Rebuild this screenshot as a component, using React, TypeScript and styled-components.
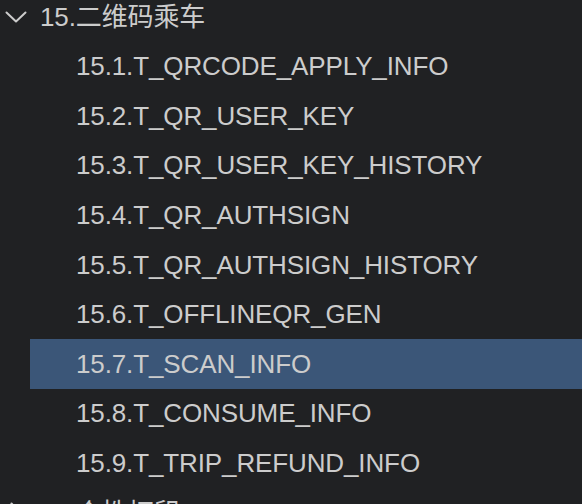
import React from "react";
import styled, { createGlobalStyle } from "styled-components";

const Global = createGlobalStyle`
  html, body {
    margin: 0;
    padding: 0;
    background: #202123;
    overflow: hidden;
  }
  body {
    font-family: "Liberation Sans", "Noto Sans CJK SC", sans-serif;
  }
`;

const Tree = styled.div`
  width: 582px;
  height: 504px;
  overflow: hidden;
  background: #202123;
  color: #cccccc;
  font-family: "Liberation Sans", "Noto Sans CJK SC", sans-serif;
  font-size: 26px;
`;

const List = styled.div`
  display: flex;
  flex-direction: column;
  margin-top: -8.2px;
`;

const Row = styled.div<{ $depth: number; $selected?: boolean }>`
  display: flex;
  align-items: center;
  height: 49.6px;
  box-sizing: border-box;
  margin-left: ${(p) => (p.$depth === 0 ? 0 : 30)}px;
  padding-left: ${(p) => (p.$depth === 0 ? 5 : 46)}px;
  background: ${(p) => (p.$selected ? "#3b5678" : "transparent")};
  white-space: nowrap;
`;

const Chevron = styled.svg<{ $open: boolean }>`
  width: 22px;
  height: 22px;
  flex: none;
  margin-right: 13px;
  transform: rotate(${(p) => (p.$open ? 0 : -90)}deg);
`;

const Label = styled.span`
  line-height: 1;
  letter-spacing: -0.12px;
`;

const Arrow = ({ open }: { open: boolean }) => (
  <Chevron $open={open} viewBox="0 0 22 22">
    <path
      d="M1.5 6.5 L11 15.5 L20.5 6.5"
      fill="none"
      stroke="#cccccc"
      strokeWidth="2"
      strokeLinecap="round"
      strokeLinejoin="round"
    />
  </Chevron>
);

const children = [
  "15.1.T_QRCODE_APPLY_INFO",
  "15.2.T_QR_USER_KEY",
  "15.3.T_QR_USER_KEY_HISTORY",
  "15.4.T_QR_AUTHSIGN",
  "15.5.T_QR_AUTHSIGN_HISTORY",
  "15.6.T_OFFLINEQR_GEN",
  "15.7.T_SCAN_INFO",
  "15.8.T_CONSUME_INFO",
  "15.9.T_TRIP_REFUND_INFO",
];

export default function App() {
  return (
    <Tree>
      <Global />
      <List>
        <Row $depth={0}>
          <Arrow open />
          <Label>15.二维码乘车</Label>
        </Row>
        {children.map((c) => (
          <Row key={c} $depth={1} $selected={c === "15.7.T_SCAN_INFO"}>
            <Label>{c}</Label>
          </Row>
        ))}
        <Row $depth={0}>
          <Arrow open={false} />
          <Label>16.个性打印</Label>
        </Row>
      </List>
    </Tree>
  );
}
